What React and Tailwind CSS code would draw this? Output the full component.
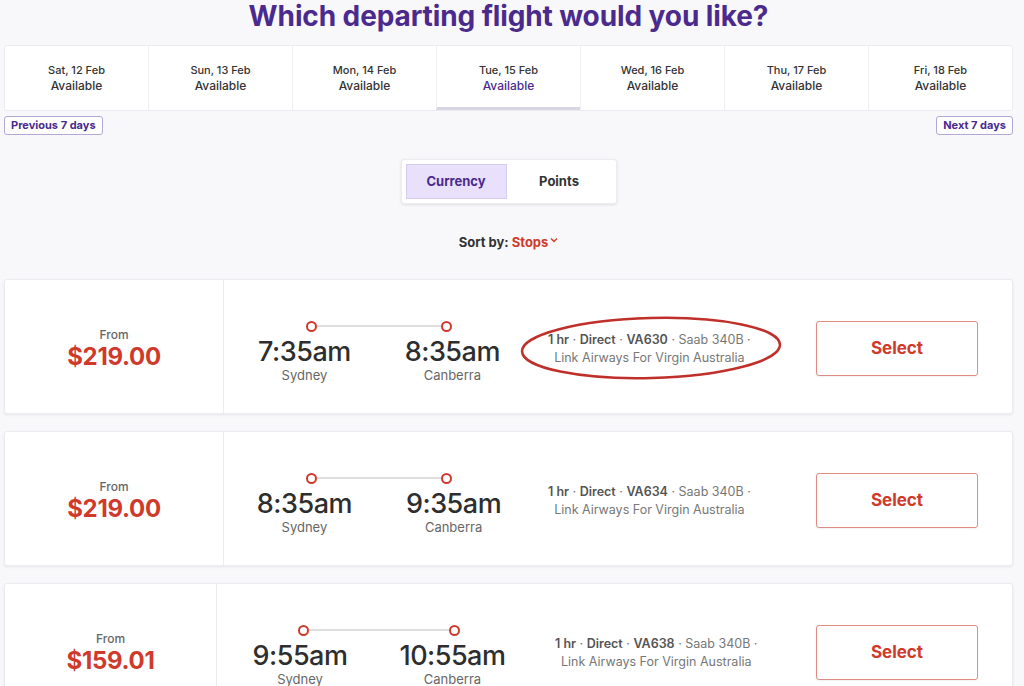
import React from 'react';

const days = [
  { d: 'Sat, 12 Feb' },
  { d: 'Sun, 13 Feb' },
  { d: 'Mon, 14 Feb' },
  { d: 'Tue, 15 Feb', active: true },
  { d: 'Wed, 16 Feb' },
  { d: 'Thu, 17 Feb' },
  { d: 'Fri, 18 Feb' },
];

const flights = [
  { price: '$219.00', dep: '7:35am', arr: '8:35am', num: 'VA630', priceW: 'w-[219px]', timeW: 'w-[310px]', lineW: 'w-[146px]', gap: 'gap-[54px]', circled: true },
  { price: '$219.00', dep: '8:35am', arr: '9:35am', num: 'VA634', priceW: 'w-[219px]', timeW: 'w-[310px]', lineW: 'w-[146px]', gap: 'gap-[54px]' },
  { price: '$159.01', dep: '9:55am', arr: '10:55am', num: 'VA638', priceW: 'w-[212px]', timeW: 'w-[324px]', lineW: 'w-[162px]', gap: 'gap-[52px]' },
];

function Dot() {
  return <span className="block w-[11px] h-[11px] rounded-full border-2 border-[#cf3a2c] bg-white shrink-0" />;
}

function FlightCard({ f }) {
  return (
    <div className="relative flex items-stretch h-[135px] bg-white border border-[#ececf0] rounded-[3px] shadow-[0_1px_3px_rgba(0,0,0,0.08)]">
      <div className={`${f.priceW} shrink-0 flex flex-col items-center justify-center border-r border-[#ececec] pt-[4px]`}>
        <div className="text-[12px] leading-[16px] text-[#666] font-medium">From</div>
        <div className="text-[24px] leading-[28px] font-bold text-[#cf3a2c] tracking-[-0.3px]">{f.price}</div>
      </div>
      <div className={`${f.timeW} shrink-0 flex flex-col items-center justify-center pt-[10px]`}>
        <div className={`${f.lineW} flex items-center`}>
          <Dot />
          <span className="flex-1 h-[2px] bg-[#dedede]" />
          <Dot />
        </div>
        <div className={`flex ${f.gap} mt-[5px]`}>
          {[[f.dep, 'Sydney'], [f.arr, 'Canberra']].map(([t, c]) => (
            <div key={c} className="flex flex-col items-center">
              <div className="text-[27px] leading-[30px] font-medium text-[#2e2e2e] tracking-[-0.5px]">{t}</div>
              <div className="text-[13px] leading-[16px] text-[#666]">{c}</div>
            </div>
          ))}
        </div>
      </div>
      <div className="pl-[14px] flex flex-col justify-center items-center text-[12.5px] leading-[18px] text-[#777] pt-[5px]">
        <div>
          <span className="font-semibold text-[#555]">1 hr</span>
          <span>{'  · '}</span>
          <span className="font-semibold text-[#555]">Direct</span>
          <span> · </span>
          <span className="font-semibold text-[#555]">{f.num}</span>
          <span> · Saab 340B ·</span>
        </div>
        <div>Link Airways For Virgin Australia</div>
      </div>
      <div className="ml-auto mr-[34px] flex items-center pt-[4px]">
        <button className="w-[162px] h-[55px] border border-[#e08b84] rounded-[3px] bg-white text-[17px] font-bold text-[#cf3a2c] shadow-[0_1px_2px_rgba(0,0,0,0.06)]">Select</button>
      </div>
      {f.circled && (
        <svg className="absolute left-[513px] top-[34px] pointer-events-none" width="266" height="68" viewBox="0 0 266 68">
          <ellipse cx="133" cy="34" rx="129" ry="30" fill="none" stroke="#c0302b" strokeWidth="2.5" transform="rotate(-1.5 133 34)" />
        </svg>
      )}
    </div>
  );
}

export default function App() {
  return (
    <div className="min-h-[686px] bg-[#f8f8fa] overflow-hidden pl-[4px] pr-[11px]" style={{ fontFamily: 'Inter, "Open Sans", sans-serif' }}>
      <h1 className="text-center text-[28px] leading-[32px] font-bold text-[#4b2a8e] tracking-[-0.1px]">Which departing flight would you like?</h1>
      <div className="mt-[13px]">
        <div className="flex h-[66px] bg-white border border-[#ececf0] rounded-[3px]">
          {days.map((day, i) => (
            <div
              key={day.d}
              className={`flex-1 flex flex-col items-center justify-center ${i > 0 ? 'border-l border-[#efefef]' : ''} ${day.active ? 'border-b-[3px] border-b-[#d8d6e2] pt-[3px]' : ''}`}
            >
              <div className="text-[11px] leading-[16px] font-medium text-[#333]">{day.d}</div>
              <div className={`text-[12px] leading-[16px] font-medium ${day.active ? 'text-[#4b2a8e]' : 'text-[#333]'}`}>Available</div>
            </div>
          ))}
        </div>
        <div className="flex justify-between mt-[5px]">
          <button className="h-[19px] px-[6px] border border-[#b3a7d6] rounded-[3px] bg-white text-[11px] font-bold text-[#4b2a8e]">Previous 7 days</button>
          <button className="h-[19px] px-[6px] border border-[#b3a7d6] rounded-[3px] bg-white text-[11px] font-bold text-[#4b2a8e]">Next 7 days</button>
        </div>
      </div>
      <div className="flex justify-center mt-[24px]">
        <div className="flex w-[216px] h-[45px] p-[4px] bg-white border border-[#ececf0] rounded-[3px] shadow-[0_1px_3px_rgba(0,0,0,0.1)]">
          <div className="w-[101px] flex items-center justify-center bg-[#e9e1fb] border border-[#d6ccef] text-[13px] font-bold text-[#4b2a8e]">Currency</div>
          <div className="flex-1 flex items-center justify-center text-[13px] font-bold text-[#333]">Points</div>
        </div>
      </div>
      <div className="flex justify-center items-center mt-[29px] text-[13px] leading-[18px] font-bold">
        <span className="text-[#333]">Sort by:&nbsp;</span>
        <span className="text-[#cf3a2c]">Stops</span>
        <svg className="ml-[2px] -mt-[5px]" width="8" height="6" viewBox="0 0 8 6"><path d="M1 1.5 L4 4.5 L7 1.5" fill="none" stroke="#cf3a2c" strokeWidth="1.3" /></svg>
      </div>
      <div className="flex flex-col gap-[17px] mt-[28px]">
        {flights.map(f => <FlightCard key={f.num} f={f} />)}
      </div>
    </div>
  );
}
